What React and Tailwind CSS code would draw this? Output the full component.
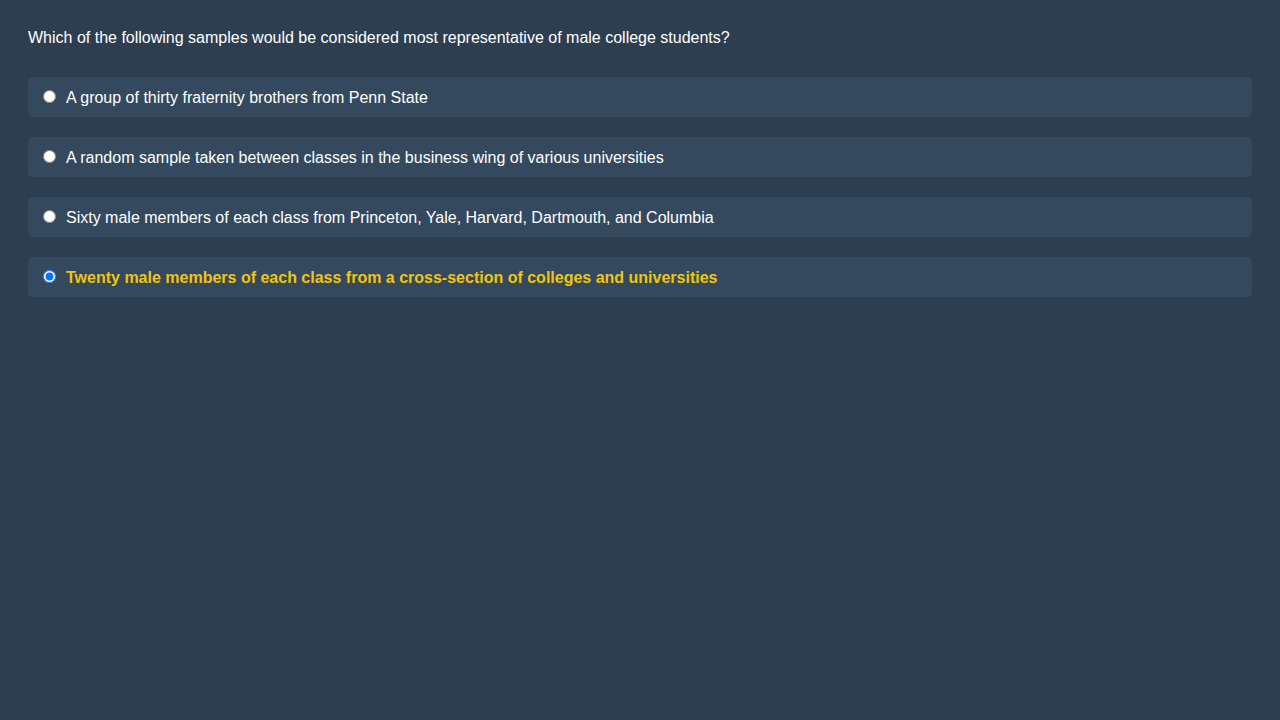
import { useState } from "react";

const options = [
  "A group of thirty fraternity brothers from Penn State",
  "A random sample taken between classes in the business wing of various universities",
  "Sixty male members of each class from Princeton, Yale, Harvard, Dartmouth, and Columbia",
  "Twenty male members of each class from a cross-section of colleges and universities",
];

export default function App() {
  const [selected, setSelected] = useState(3);

  return (
    <div
      className="min-h-screen bg-[#2c3e50] px-[28px] pt-[28px] text-white text-[16px]"
      style={{ fontFamily: '"Liberation Sans", Arial, sans-serif' }}
    >
      <p className="leading-[20px] mb-[29px]">
        Which of the following samples would be considered most representative of male college students?
      </p>
      <div className="flex flex-col gap-[20px]">
        {options.map((text, i) => (
          <label
            key={i}
            className="flex items-center h-[40px] pl-[15px] pr-[10px] rounded-[5px] bg-[#34495e] cursor-pointer"
          >
            <input
              type="radio"
              name="answer"
              checked={selected === i}
              onChange={() => setSelected(i)}
              className="w-[13px] h-[13px] mr-[10px] -mt-[1px]"
            />
            <span
              className={
                selected === i
                  ? "font-bold text-[#f1c40f] leading-[20px] mt-[2px]"
                  : "leading-[20px] mt-[2px]"
              }
            >
              {text}
            </span>
          </label>
        ))}
      </div>
    </div>
  );
}
